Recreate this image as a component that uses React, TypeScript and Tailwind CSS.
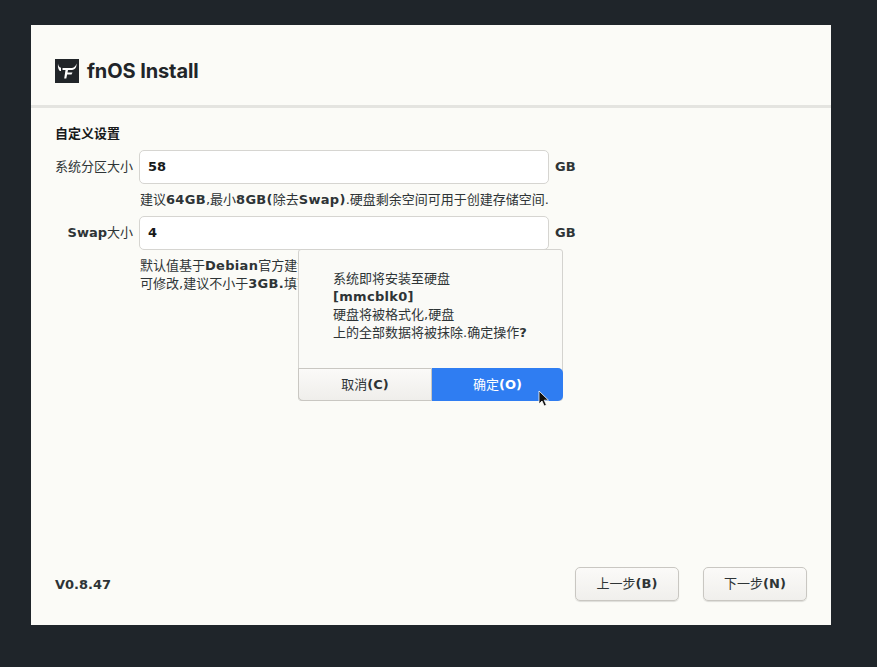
const body = { fontFamily: '"DejaVu Sans", "Noto Sans CJK SC", sans-serif' }

const Logo = () => (
  <svg width="24" height="24" viewBox="0 0 24 24" className="shrink-0">
    <rect width="24" height="24" fill="#212529" />
    <path d="M3 4.500c.2 2.300 1 3.700 3 4.300v3.200H4.800C3.400 10.500 2.600 8 3 4.500z" fill="#fff" />
    <path d="M21.500 4.500c.3 3.500-1.300 6.200-4.500 6.500H13l-.5 2.600h5l-1 2h-4.400l-.8 4H9.200l1.300-8.600H7.500V9H17c2.400-.3 3.800-2 4.500-4.500z" fill="#fff" />
  </svg>
)

const Field = ({ label, value, bold }: { label: string; value: string; bold?: boolean }) => (
  <div className="flex items-center h-[34px]">
    <label className="w-[78px] text-right text-[13px] text-[#2e3436] whitespace-nowrap">
      {bold ? <b>Swap</b> : null}
      {label}
    </label>
    <div className="ml-[6px] w-[410px] h-[34px] bg-white border border-[#d6d5d1] rounded-[5px] flex items-center pl-[8px] text-[13px] font-bold text-[#17191a]">
      {value}
    </div>
    <span className="ml-[6px] text-[13px] font-bold text-[#2e3436]">GB</span>
  </div>
)

const FooterButton = ({ text, hotkey }: { text: string; hotkey: string }) => (
  <button className="w-[104px] h-[34px] rounded-[5px] border border-[#c9c7c2] bg-gradient-to-b from-[#fbfaf8] to-[#f0efec] shadow-[0_1px_1px_rgba(0,0,0,0.12)] text-[13px] text-[#2e3436]">
    {text}
    <b>({hotkey})</b>
  </button>
)

export default function App() {
  return (
    <div className="w-[877px] h-[667px] bg-[#1f252a] pt-[25px] pl-[31px] overflow-hidden" style={body}>
      <div className="relative w-[800px] h-[600px] bg-[#fbfbf7] flex flex-col">
        <header className="h-[83px] shrink-0 border-b-[3px] border-[#e4e4e0] flex items-center gap-[8px] pl-[24px] pt-[12px]">
          <Logo />
          <h1 className="text-[20px] font-bold tracking-[-0.1px] text-[#212529]" style={{ fontFamily: "Inter, sans-serif" }}>
            fnOS Install
          </h1>
        </header>

        <main className="flex-1 pl-[24px] pt-[17px]">
          <h2 className="text-[13px] font-bold leading-[18px] text-[#17191a]">自定义设置</h2>
          <div className="mt-[7px]">
            <Field label="系统分区大小" value="58" />
          </div>
          <p className="ml-[85px] mt-[7px] h-[25px] text-[13px] leading-[18px] text-[#2e3436] whitespace-nowrap">
            建议<b className="tracking-[0.3px]">64GB</b>,最小<b className="tracking-[0.3px]">8GB(</b>除去<b className="tracking-[0.3px]">Swap)</b>.硬盘剩余空间可用于创建存储空间.
          </p>
          <Field label="大小" value="4" bold />
          <p className="ml-[85px] mt-[7px] w-[158px] overflow-hidden whitespace-nowrap text-[13px] leading-[18px] text-[#2e3436]">
            默认值基于<b className="tracking-[0.3px]">Debian</b>官方建议
            <br />
            可修改,建议不小于<b className="tracking-[0.3px]">3GB.</b>填写
          </p>
        </main>

        <footer className="h-[58px] shrink-0 flex items-start justify-between pl-[24px] pr-[24px]">
          <span className="mt-[8px] text-[13px] font-bold text-[#2e3436]">V0.8.47</span>
          <div className="flex gap-[24px]">
            <FooterButton text="上一步" hotkey="B" />
            <FooterButton text="下一步" hotkey="N" />
          </div>
        </footer>

        <div className="absolute left-[267px] top-[224px] w-[265px] h-[152px] bg-[#fafaf7] border border-[#d4d3cf] rounded-[3px] flex flex-col">
          <div className="flex-1 pl-[34px] pt-[20px] text-[13px] leading-[18px] text-[#2e3436]">
            系统即将安装至硬盘
            <br />
            <b className="tracking-[0.3px]">[mmcblk0]</b>
            <br />
            硬盘将被格式化,硬盘
            <br />
            上的全部数据将被抹除.确定操作<b>?</b>
          </div>
          <div className="flex h-[33px] -mx-px -mb-px text-[13px]">
            <button className="w-[134px] rounded-bl-[5px] border border-[#c9c7c2] bg-gradient-to-b from-[#fbfaf8] to-[#efeeeb] text-[#2e3436]">
              取消<b>(C)</b>
            </button>
            <button className="flex-1 rounded-r-[5px] rounded-bl-none bg-[#2f7df2] text-white">
              确定<b>(O)</b>
            </button>
          </div>
        </div>

        <svg width="12" height="18" viewBox="0 0 12 18" className="absolute left-[507px] top-[365px]">
          <path d="M1 1v13l3-3 2.200 5 2.200-1-2.200-4.800H10.500z" fill="#111" stroke="#fff" strokeWidth="0.8" />
        </svg>
      </div>
    </div>
  )
}
